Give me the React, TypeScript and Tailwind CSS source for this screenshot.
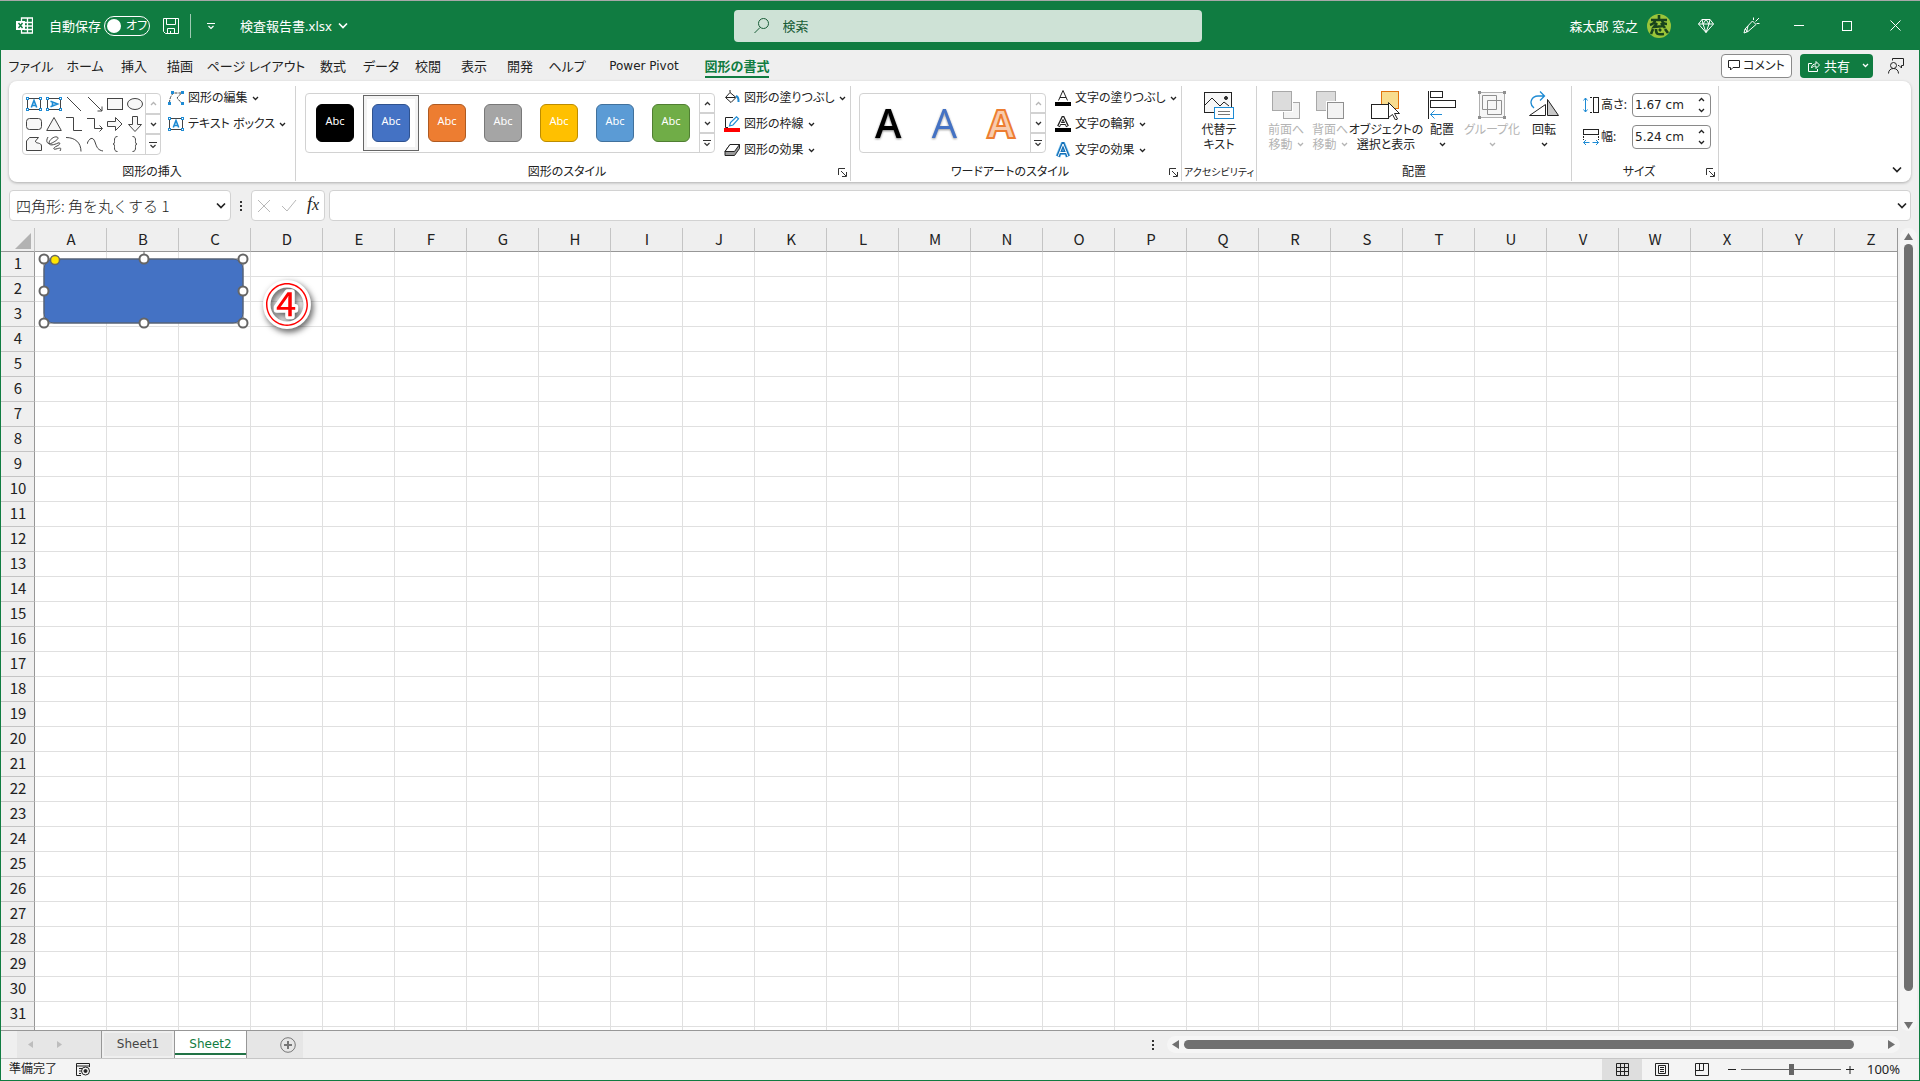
import React from "react";
import clsx from "clsx";

const menuTabs = [
  { label: "ファイル", width: "w-[56px]" },
  { label: "ホーム", width: "w-[52px]" },
  { label: "挿入", width: "w-[46px]" },
  { label: "描画", width: "w-[46px]" },
  { label: "ページ レイアウト", width: "w-[106px]" },
  { label: "数式", width: "w-[48px]" },
  { label: "データ", width: "w-[48px]" },
  { label: "校閲", width: "w-[46px]" },
  { label: "表示", width: "w-[46px]" },
  { label: "開発", width: "w-[46px]" },
  { label: "ヘルプ", width: "w-[48px]" },
  { label: "Power Pivot", width: "w-[106px]" },
  { label: "図形の書式", width: "w-[80px]", active: true },
];

const shapeStyles = [
  "bg-black border-black",
  "bg-[#4472c4] border-[#2f528f]",
  "bg-[#ed7d31] border-[#ae5a21]",
  "bg-[#a5a5a5] border-[#787878]",
  "bg-[#ffc000] border-[#bc8c00]",
  "bg-[#5b9bd5] border-[#41719c]",
  "bg-[#70ad47] border-[#507e32]",
];

const columns = "ABCDEFGHIJKLMNOPQRSTUVWXYZ".split("");
const rows = Array.from({ length: 31 }, (_, i) => i + 1);

type IconProps = {
  w?: number;
  h?: number;
  className?: string;
  children: React.ReactNode;
};

const Icon = ({ w = 16, h = 16, className, children }: IconProps) => (
  <svg
    width={w}
    height={h}
    viewBox={`0 0 ${w} ${h}`}
    fill="none"
    stroke="currentColor"
    className={clsx("shrink-0", className)}
    aria-hidden="true"
  >
    {children}
  </svg>
);

const Chevron = ({ up, className }: { up?: boolean; className?: string }) => (
  <Icon w={7} h={5} className={className}>
    <path d={up ? "M1 4l2.5-2.5L6 4" : "M1 1l2.5 2.5L6 1"} strokeWidth="1.3" />
  </Icon>
);

const BigChevron = () => (
  <Icon w={10} h={7}>
    <path d="M1 1.5l4 4 4-4" strokeWidth="1.7" />
  </Icon>
);

const MoreChevron = () => (
  <Icon w={8} h={8}>
    <path d="M0 1.5h8M1.5 4l2.5 2.5L6.500 4" strokeWidth="1.2" />
  </Icon>
);

const Launcher = () => (
  <button aria-label="詳細設定" className="flex text-[#333]">
    <Icon w={9} h={9}>
      <path d="M.5 7V.5H7M3 3l5 5M8.500 4v4.500H4" />
    </Icon>
  </button>
);

const TextBoxIcon = ({ vertical }: { vertical?: boolean }) => (
  <Icon w={16} h={14}>
    <rect x="1.5" y="1.500" width="13" height="11" stroke="#444" />
    <g fill="#fff" stroke="#1e8bd4">
      <rect x=".5" y=".5" width="2" height="2" />
      <rect x="13.5" y=".5" width="2" height="2" />
      <rect x=".5" y="11.5" width="2" height="2" />
      <rect x="13.5" y="11.5" width="2" height="2" />
    </g>
    <path
      d="M5.300 10.500L8 3.500l2.700 7M6.300 8.500h3.400"
      stroke="#1e8bd4"
      strokeWidth="1.6"
      transform={vertical ? "rotate(90 8 7)" : undefined}
    />
  </Icon>
);

const shapeIcons = [
  <TextBoxIcon />,
  <TextBoxIcon vertical />,
  <Icon><path d="M1 1l14 14" /></Icon>,
  <Icon><path d="M1 1l14 14M15 10.500V15h-4.500" /></Icon>,
  <Icon><rect x=".5" y="2.500" width="15" height="11" fill="#f7f7f7" /></Icon>,
  <Icon><ellipse cx="8" cy="8" rx="7.500" ry="5.500" fill="#f7f7f7" /></Icon>,
  <Icon><rect x=".5" y="2.500" width="15" height="11" rx="3" fill="#f7f7f7" /></Icon>,
  <Icon><path d="M8 1.500L15.300 14.500H.7z" fill="#f7f7f7" /></Icon>,
  <Icon><path d="M0 1.500h7.500v13H16" /></Icon>,
  <Icon><path d="M0 2.500h7.500v10H15M12.500 9.500l3 3-3 3" /></Icon>,
  <Icon><path d="M.5 5.500h8v-4l6.500 6.500-6.500 6.500v-4h-8z" fill="#f7f7f7" /></Icon>,
  <Icon><path d="M5.500.5h5v8h4L8 15.500 1.500 8.500h4z" fill="#f7f7f7" /></Icon>,
  <Icon><path d="M.5 14.500V5l3-3.500h9L9.500 5c-.5 3 6 1 6 5v4.500z" fill="#f7f7f7" /></Icon>,
  <Icon><path d="M2 1c-3 5 0 8 4 6s8-5 5-6-8 3-8 6 5 2 9 0c3-1 2 2-1 3s-5 4-1 3 6-2 4 2" /></Icon>,
  <Icon><path d="M0 1.500c9 0 15 5 15 14" /></Icon>,
  <Icon><path d="M0 8c2-6 6-8 8-2s3 8 8 9" /></Icon>,
  <Icon><path d="M10.500.5C5 .5 9.500 8 6 8c3.500 0-1 7.500 4.500 7.500" /></Icon>,
  <Icon><path d="M5.500.5C11 .5 6.500 8 10 8c-3.500 0 1 7.500-4.500 7.500" /></Icon>,
];

const GalleryScroll = ({ upOff }: { upOff?: boolean }) => (
  <div className="flex w-[15px] flex-col divide-y-2 divide-[#d2d2d2] border-l border-[#d2d2d2] text-[#333]">
    <button
      aria-label="上へ"
      className={clsx("flex flex-1 items-center justify-center", upOff && "text-[#b5b5b5]")}
    >
      <Chevron up />
    </button>
    <button aria-label="下へ" className="flex flex-1 items-center justify-center">
      <Chevron />
    </button>
    <button aria-label="その他" className="flex flex-1 items-center justify-center">
      <MoreChevron />
    </button>
  </div>
);

const Group = ({
  label,
  width,
  launcher,
  narrow,
  children,
}: {
  label: string;
  width: string;
  launcher?: boolean;
  narrow?: boolean;
  children: React.ReactNode;
}) => (
  <section
    aria-label={label}
    className={clsx("flex shrink-0 flex-col border-r border-[#d2d2d2]", width)}
  >
    <div className="flex h-[77px]">{children}</div>
    <div className="flex h-[18px] items-center">
      <span
        className={clsx("flex flex-1 justify-center whitespace-nowrap", narrow && "text-[10px]")}
      >
        {label}
      </span>
      {launcher && (
        <span className="w-3">
          <Launcher />
        </span>
      )}
    </div>
  </section>
);

const SmallButton = ({ icon, children }: { icon: React.ReactNode; children: React.ReactNode }) => (
  <button className="flex h-[26px] items-center gap-1 whitespace-nowrap pb-[2px]">
    <span className="flex w-4 justify-center">{icon}</span>
    <span>{children}</span>
    <Chevron />
  </button>
);

const LargeButton = ({
  icon,
  lines,
  width,
  disabled,
  menu,
}: {
  icon: React.ReactNode;
  lines: string[];
  width: string;
  disabled?: boolean;
  menu?: boolean;
}) => (
  <button
    disabled={disabled}
    className={clsx(
      "flex flex-col items-center whitespace-nowrap pt-[2px]",
      width,
      disabled && "text-[#b4b4b4]"
    )}
  >
    <span className="flex h-[34px] items-center">{icon}</span>
    <span className="h-[15px]">{lines[0]}</span>
    <span className="flex h-[15px] items-center gap-1">
      {lines[1]}
      {menu && <Chevron />}
    </span>
  </button>
);

const TitleBar = () => (
  <header className="flex h-[49px] shrink-0 items-center bg-[#107c41] text-white">
    <div className="flex flex-1 items-center pl-4">
      <Icon w={17} h={17}>
        <path d="M5.500 4V1h11v15h-11v-3M8 5.500h8M8 9h8M8 12.500h8M11.500 1v15" strokeWidth="1.3" />
        <rect x="0" y="4" width="9" height="9" fill="#fff" stroke="none" />
        <path d="M2.500 6l4 5M6.500 6l-4 5" stroke="#107c41" strokeWidth="1.4" />
      </Icon>
      <label className="ml-4 flex items-center gap-[3px]">
        自動保存
        <input type="checkbox" className="peer sr-only" />
        <span className="flex h-5 w-[46px] items-center gap-[5px] rounded-full border border-white pl-[2px]">
          <span className="size-[14px] rounded-full bg-white" />
          <span className="text-[12px]">オフ</span>
        </span>
      </label>
      <button aria-label="保存" className="ml-[13px]">
        <Icon>
          <path d="M.5.5h15v15h-13l-2-2zM3.500.5v6h9v-6M4.500 15.500v-5h7v5M7.500 13v2" />
        </Icon>
      </button>
      <span className="ml-[11px] h-6 w-px bg-white/60" />
      <button aria-label="クイック アクセス ツール バーのカスタマイズ" className="ml-4">
        <MoreChevron />
      </button>
      <button className="ml-[25px] flex items-center gap-[6px]">
        <span>検査報告書.xlsx</span>
        <BigChevron />
      </button>
    </div>
    <label className="flex h-8 w-[468px] items-center gap-[13px] rounded bg-[#cee2d6] pl-5 text-[#185c37]">
      <Icon>
        <circle cx="9.500" cy="5.500" r="5" />
        <path d="M6 9.500L.5 15" />
      </Icon>
      <input
        type="text"
        aria-label="検索"
        placeholder="検索"
        className="flex-1 bg-transparent outline-none placeholder:text-[#185c37] placeholder:opacity-100"
      />
    </label>
    <div className="flex flex-1 items-center justify-end pr-px">
      <span>森太郎 窓之</span>
      <svg width="24" height="24" viewBox="0 0 24 24" className="ml-[9px]" aria-hidden="true">
        <circle cx="12" cy="12" r="12" fill="#9bc53a" />
        <path
          d="M12 1v4M4 6h16M8 6c0 3-2 4-5 5M15 6c0 3 3 4 5 4M10 9l-3 4 10-1M14 9l4 5M6 15l-2 5M9 15c0 5 1 6 8 5M12 15l2 2M18 15l3 4"
          stroke="#17431c"
          strokeWidth="2.600"
          fill="none"
        />
      </svg>
      <button aria-label="Premium" className="ml-[27px]">
        <Icon className="block">
          <path d="M4 1.500h8l3.500 4.500L8 14.500.5 6zM.5 6h15M5 6l3 8.500L11 6M4 1.500L5 6l3-4.500L11 6l1-4.500" />
        </Icon>
      </button>
      <button aria-label="新機能" className="ml-[29px]">
        <Icon w={17} h={17} className="block">
          <path d="M9.500 4l3.500 3.500L5 14.500l-4 1.500 1-4zM2 12l3 2.500M5 9l-1.500 6M10.500 3V.5M12.500 4.500L16 1M13.500 6.500h3" />
        </Icon>
      </button>
      <div className="ml-[15px] flex">
        <button aria-label="最小化" className="flex h-8 w-12 items-center justify-center">
          <Icon w={10} h={10}><path d="M0 4.500h10" /></Icon>
        </button>
        <button aria-label="最大化" className="flex h-8 w-12 items-center justify-center">
          <Icon w={10} h={10}><rect x=".5" y=".5" width="9" height="9" /></Icon>
        </button>
        <button aria-label="閉じる" className="flex h-8 w-12 items-center justify-center">
          <Icon w={11} h={11}><path d="M.5.5l10 10M10.500.5l-10 10" /></Icon>
        </button>
      </div>
    </div>
  </header>
);

const MenuTabs = () => (
  <nav className="flex h-[31px] shrink-0 items-center pr-[15px] pl-[2px]">
    {menuTabs.map((tab) => (
      <button
        key={tab.label}
        className={clsx("flex h-full justify-center whitespace-nowrap pt-[6px]", tab.width)}
      >
        <span
          className={clsx(
            "h-[22px] border-b-2 leading-5",
            tab.active ? "border-[#107c41] font-bold text-[#107c41]" : "border-transparent",
            tab.label === "Power Pivot" && "font-['DejaVu_Sans',sans-serif] text-[12px]"
          )}
        >
          {tab.label}
        </span>
      </button>
    ))}
    <button className="ml-auto flex h-6 w-[71px] items-center justify-center gap-[3px] rounded border border-[#8a8a8a] bg-white text-[12px]">
      <Icon w={12} h={11}><path d="M.5.5h11v7H5l-2.500 2.500V7.500h-2z" /></Icon>
      コメント
    </button>
    <button className="ml-2 flex h-6 w-[73px] items-center rounded bg-[#107c41] pl-2 text-white">
      <Icon w={12} h={12}>
        <path d="M4 3.500H.5v8h9V9M3.500 8c0-3 2-4 4.500-4V1.500L11.500 5 8 8.500V6C6 6 4.500 6.500 3.500 8z" />
      </Icon>
      <span className="mr-3 ml-1">共有</span>
      <Chevron />
    </button>
    <button aria-label="アカウント" className="ml-[15px]">
      <Icon w={16} h={16}>
        <circle cx="5.500" cy="7.500" r="3" />
        <path d="M.5 15.500c0-3 2-5 5-5s5 2 5 5M4.500 2.500v-2h11v7h-2V10L11 7.500H10" />
      </Icon>
    </button>
  </nav>
);

const Ribbon = () => (
  <div className="mx-2 flex h-[101px] shrink-0 rounded-lg bg-white pt-[5px] pb-px text-[12px] shadow-[0_1px_3px_rgba(0,0,0,0.28)]">
    <Group label="図形の挿入" width="w-[287px]">
      <div className="mt-[7px] ml-[13px] flex h-[62px] rounded border border-[#d2d2d2]">
        <div className="grid w-[122px] grid-cols-6 place-items-center pl-px text-[#444]">
          {shapeIcons.map((icon, i) => (
            <button key={i} aria-label={`図形 ${i + 1}`}>
              {icon}
            </button>
          ))}
        </div>
        <GalleryScroll upOff />
      </div>
      <div className="ml-[7px] flex-col">
        <SmallButton
          icon={
            <Icon w={16} h={14}>
              <path d="M1.500 12c0-6 3-9 4-10h5l3 0M13 2.500L9 7l4.500 5" stroke="#444" strokeDasharray="3 1" />
              <path d="M3 0h3v3H3zM13 0h3v3h-3zM0 11h3v3H0zM13 11h3v3h-3z" fill="#1e8bd4" stroke="none" />
            </Icon>
          }
        >
          図形の編集
        </SmallButton>
        <SmallButton icon={<TextBoxIcon />}>テキスト ボックス</SmallButton>
      </div>
    </Group>

    <Group label="図形のスタイル" width="w-[555px]" launcher>
      <div className="mt-[7px] ml-[9px] flex h-[60px] rounded border border-[#d2d2d2]">
        <div className="flex w-[393px] items-center pl-px">
          {shapeStyles.map((color, i) => (
            <button
              key={color}
              aria-label={`スタイル ${i + 1}`}
              className={clsx(
                "flex size-14 items-center justify-center border",
                i === 1 ? "border-[#666] shadow-[inset_0_0_0_3px_#f3f3f3]" : "border-transparent"
              )}
            >
              <span
                className={clsx(
                  "flex size-[38px] items-center justify-center rounded-md border pb-1 text-[11px] text-white",
                  color
                )}
              >
                Abc
              </span>
            </button>
          ))}
        </div>
        <GalleryScroll />
      </div>
      <div className="ml-[9px] flex-col">
        <SmallButton
          icon={
            <Icon>
              <path d="M6 2.500l6 5-5 5-5.500-5zM6 2.500V0M2 7.500h9" />
              <path d="M12 6c3 1 2.500 4 2.500 6" stroke="#1e8bd4" strokeWidth="2" />
            </Icon>
          }
        >
          図形の塗りつぶし
        </SmallButton>
        <SmallButton
          icon={
            <Icon>
              <path d="M9 1.500H1.500v10H4" />
              <path d="M5.500 10l1-3.500L12.500.8l2 2L9 9z" stroke="#1e8bd4" strokeWidth="1.200" />
              <path d="M0 12h16v4H0z" fill="#f00" stroke="none" />
            </Icon>
          }
        >
          図形の枠線
        </SmallButton>
        <SmallButton
          icon={
            <Icon>
              <path d="M1 9.500L6 2.500h9.500v4L10.500 13.500H1z" fill="#999" />
              <path d="M1 9.500L6 2.500h9.500L10.500 9.500z" fill="#fff" />
            </Icon>
          }
        >
          図形の効果
        </SmallButton>
      </div>
    </Group>

    <Group label="ワードアートのスタイル" width="w-[331px]" launcher>
      <div className="mt-[7px] ml-2 flex h-[60px] rounded border border-[#d2d2d2]">
        <div className="flex w-[170px] items-center justify-around font-['Open_Sans',sans-serif] text-[40px] leading-none font-semibold">
          <button className="pb-px text-black drop-shadow-[0_1px_1px_rgba(0,0,0,0.5)]">A</button>
          <button className="pb-px font-medium text-[#4472c4] drop-shadow-[0_1px_1px_rgba(0,0,0,0.4)]">A</button>
          <button className="pb-px font-bold text-[#f8cbad] [-webkit-text-stroke:2px_#ed7d31]">A</button>
        </div>
        <GalleryScroll upOff />
      </div>
      <div className="ml-[9px] flex-col">
        <SmallButton
          icon={
            <Icon>
              <path d="M3.500 10.500L8 .5l4.500 10M5 7.500h6" />
              <path d="M0 12h16v4H0z" fill="#000" stroke="none" />
            </Icon>
          }
        >
          文字の塗りつぶし
        </SmallButton>
        <SmallButton
          icon={
            <Icon>
              <path d="M3.500 10.500L8 1l4.500 9.500M5 7.500h6" strokeWidth="3" />
              <path d="M4 10L8 1.500l4 8.500M5 7.500h6" stroke="#fff" />
              <path d="M0 12h16v4H0z" fill="#000" stroke="none" />
            </Icon>
          }
        >
          文字の輪郭
        </SmallButton>
        <SmallButton
          icon={
            <Icon>
              <path d="M3 14.500L8 2l5 12.500M5 10.500h6" stroke="#7fc4f0" strokeWidth="5" />
              <path d="M3 14.500L8 2l5 12.500M5 10.500h6" stroke="#1470b8" strokeWidth="3.500" />
              <path d="M3 14.500L8 2l5 12.500M5 10.500h6" stroke="#fff" />
            </Icon>
          }
        >
          文字の効果
        </SmallButton>
      </div>
    </Group>

    <Group label="アクセシビリティ" width="w-[75px]" narrow>
      <LargeButton
        width="w-full"
        lines={["代替テ", "キスト"]}
        icon={
          <Icon w={30} h={27}>
            <rect x=".5" y=".5" width="27" height="20" fill="#f7f7f7" />
            <path d="M1 13l7-7 8 8 4-4 5 4" />
            <circle cx="22" cy="6" r="1.500" fill="#333" />
            <rect x="10.500" y="15.500" width="19" height="11" fill="#fff" stroke="#1e8bd4" />
            <path d="M14 19.500h12M14 22.500h12" stroke="#777" />
          </Icon>
        }
      />
    </Group>

    <Group label="配置" width="w-[315px]">
      <div className="flex pl-[7px]">
        <LargeButton
          disabled
          menu
          width="w-[44px]"
          lines={["前面へ", "移動"]}
          icon={
            <Icon w={28} h={28}>
              <rect x="11.500" y="11.500" width="16" height="16" fill="#f3f3f3" stroke="#a8a8a8" />
              <path d="M0 0h21v21H0z" fill="#fff" stroke="none" />
              <rect x=".5" y=".5" width="19" height="19" fill="#dcdcdc" stroke="#a8a8a8" />
            </Icon>
          }
        />
        <LargeButton
          disabled
          menu
          width="w-[44px]"
          lines={["背面へ", "移動"]}
          icon={
            <Icon w={28} h={28}>
              <rect x=".5" y=".5" width="19" height="19" fill="#dcdcdc" stroke="#a8a8a8" />
              <path d="M10 10h18v18H10z" fill="#fff" stroke="none" />
              <rect x="11.500" y="11.500" width="16" height="16" fill="#f3f3f3" stroke="#8f8f8f" />
            </Icon>
          }
        />
        <LargeButton
          width="w-[68px]"
          lines={["オブジェクトの", "選択と表示"]}
          icon={
            <Icon w={30} h={30}>
              <rect x="10.500" y="1.500" width="17" height="17" fill="#f8dc8f" stroke="#e0730e" />
              <rect x=".5" y="14.500" width="17" height="14" fill="#fff" />
              <path d="M17.500 12.500l11 11h-5l3 5.500-2 1-3-5.500-4 3z" fill="#fff" />
            </Icon>
          }
        />
        <LargeButton
          menu
          width="w-[44px]"
          lines={["配置"]}
          icon={
            <Icon w={28} h={28}>
              <path d="M.5 0v28" />
              <rect x="2.500" y=".5" width="12" height="6" />
              <rect x="2.500" y="9.500" width="25" height="7" />
              <path d="M14 23.500H2.500M6.500 19.500l-4 4 4 4" stroke="#1e8bd4" />
            </Icon>
          }
        />
        <LargeButton
          disabled
          menu
          width="w-[56px]"
          lines={["グループ化"]}
          icon={
            <Icon w={28} h={28}>
              <rect x="1.500" y="1.500" width="25" height="25" fill="#f7f7f7" stroke="#b0b0b0" />
              <path d="M4.500 4.500h14v14h-14zM9.500 9.500h14v14h-14z" stroke="#8f8f8f" />
              <path d="M0 0h3v3H0zM25 0h3v3h-3zM0 25h3v3H0zM25 25h3v3h-3z" fill="#8f8f8f" stroke="none" />
            </Icon>
          }
        />
        <LargeButton
          menu
          width="w-[48px]"
          lines={["回転"]}
          icon={
            <Icon w={30} h={28}>
              <path d="M.5 24.500l16-11v11z" fill="#fff" />
              <path d="M18.500 8.500v16h11z" fill="#c8c8c8" />
              <path d="M5 17C-1 12 3 5 9 5h6M11 .5L15.500 5 11 9.500" stroke="#1e8bd4" strokeWidth="1.300" />
            </Icon>
          }
        />
      </div>
    </Group>

    <Group label="サイズ" width="w-[147px]" launcher>
      <div className="mt-[7px] ml-[11px] flex flex-col gap-2">
        <SizeField
          id="shape-height"
          label="高さ:"
          value="1.67 cm"
          icon={
            <Icon>
              <path d="M2.500 1v14M.5 3.500L2.500 1l2 2.500M.5 12.500l2 2.500 2-2.500" stroke="#1e8bd4" />
              <path d="M7 .5h3M7 15.500h3" strokeDasharray="2 1" />
              <rect x="10.500" y=".5" width="5" height="15" />
            </Icon>
          }
        />
        <SizeField
          id="shape-width"
          label="幅:"
          value="5.24 cm"
          icon={
            <Icon>
              <rect x=".5" y=".5" width="15" height="5" />
              <path d="M.5 7v4M15.500 7v4" strokeDasharray="2 1" />
              <path d="M.5 13.500h6M9.500 13.500h6M3 11l-2.500 2.500L3 16M13 11l2.500 2.500L13 16" stroke="#1e8bd4" />
            </Icon>
          }
        />
      </div>
    </Group>

    <button aria-label="リボンを折りたたむ" className="mr-[9px] mb-2 ml-auto self-end">
      <BigChevron />
    </button>
  </div>
);

const SizeField = ({
  id,
  label,
  value,
  icon,
}: {
  id: string;
  label: string;
  value: string;
  icon: React.ReactNode;
}) => (
  <div className="flex h-6 items-center gap-[2px]">
    {icon}
    <label htmlFor={id} className="w-[29px] whitespace-nowrap">
      {label}
    </label>
    <div className="flex h-6 w-[79px] items-center rounded border border-[#8a8a8a] bg-white pr-[5px] pl-[2px]">
      <input
        id={id}
        type="text"
        defaultValue={value}
        className="w-0 flex-1 font-['DejaVu_Sans',sans-serif] text-[12px] outline-none"
      />
      <div className="flex flex-col gap-[6px]">
        <button aria-label="増やす"><Chevron up className="block" /></button>
        <button aria-label="減らす"><Chevron className="block" /></button>
      </div>
    </div>
  </div>
);

const FormulaBar = () => (
  <div className="mx-2 mt-2 flex h-[31px] shrink-0">
    <div className="flex w-[222px] items-center rounded border border-[#d2d2d2] bg-white pr-1 pl-[6px]">
      <input
        type="text"
        aria-label="名前ボックス"
        defaultValue="四角形: 角を丸くする 1"
        className="w-0 flex-1 font-['Noto_Sans_CJK_JP',sans-serif] text-[15px] font-light outline-none [font-feature-settings:normal]"
      />
      <button aria-label="名前の一覧">
        <BigChevron />
      </button>
    </div>
    <div className="flex w-5 flex-col items-center justify-center gap-[2px]">
      <span className="size-[2px] bg-[#333]" />
      <span className="size-[2px] bg-[#333]" />
      <span className="size-[2px] bg-[#333]" />
    </div>
    <div className="flex w-[74px] items-center justify-between rounded border border-[#d2d2d2] bg-white px-[5px]">
      <button aria-label="キャンセル" className="text-[#b8b8b8]">
        <Icon w={14} h={14}><path d="M1 1l12 12M13 1L1 13" /></Icon>
      </button>
      <button aria-label="入力" className="text-[#b8b8b8]">
        <Icon w={16} h={13}><path d="M1 7l5 5L15 1" /></Icon>
      </button>
      <button
        aria-label="関数の挿入"
        className="pb-1 font-['Liberation_Serif',serif] text-[18px] leading-none italic"
      >
        f<span className="text-[16px]">x</span>
      </button>
    </div>
    <div className="ml-1 flex flex-1 items-center rounded border border-[#d2d2d2] bg-white pr-[3px]">
      <input type="text" aria-label="数式バー" className="h-full flex-1 outline-none" />
      <button aria-label="数式バーの展開">
        <BigChevron />
      </button>
    </div>
  </div>
);

const handles = [
  [0, 0], [100, 0], [199, 0],
  [0, 32], [199, 32],
  [0, 64], [100, 64], [199, 64],
];

// selected rounded rectangle with its resize handles
const SelectedShape = () => (
  <svg
    width="212"
    height="78"
    viewBox="-6 -8 212 78"
    className="absolute top-[23px] left-[37px]"
    aria-label="四角形: 角を丸くする 1"
  >
    <rect x="0" y="0" width="199" height="64" rx="10" fill="#4472c4" stroke="#2f528f" />
    <rect x="0" y="0" width="199" height="64" fill="none" stroke="#6b6b6b" />
    <path d="M100-8v8" stroke="#6b6b6b" />
    {handles.map(([x, y]) => (
      <circle key={`${x}-${y}`} cx={x} cy={y} r="4.500" fill="#fff" stroke="#666" strokeWidth="2" />
    ))}
    <circle cx="11" cy="1" r="4.500" fill="#ffe600" stroke="#666" strokeWidth="1.500" />
  </svg>
);

const StepBadge = () => (
  <svg
    width="60"
    height="80"
    viewBox="0 -10 60 80"
    className="absolute top-[37px] left-[256px] overflow-visible drop-shadow-[2px_3px_3px_rgba(0,0,0,0.65)]"
  >
    <text
      x="30"
      y="47"
      textAnchor="middle"
      fill="#f00"
      stroke="#fff"
      strokeWidth="6"
      strokeLinejoin="round"
      paintOrder="stroke"
      className="font-['Noto_Sans_CJK_JP',sans-serif] text-[45px] font-normal"
    >
      ④
    </text>
  </svg>
);

const Sheet = () => (
  <div className="mt-[7px] flex min-h-0 flex-1">
    <div className="relative min-w-0 flex-1 overflow-hidden border-r border-b border-[#979797]">
      <table className="w-[1906px] table-fixed border-separate border-spacing-0 font-['Noto_Sans_CJK_JP',sans-serif] text-[15px] leading-5">
        <thead>
          <tr className="h-6">
            <th className="w-[34px] border-r border-b border-[#979797] border-r-[#c4c4c4] bg-[#efefef] p-0">
              <svg width="16" height="16" className="mt-[2px] ml-[14px] block" aria-hidden="true">
                <path d="M16 0v16H0z" fill="#b2b2b2" />
              </svg>
            </th>
            {columns.map((col) => (
              <th
                key={col}
                scope="col"
                className="w-[72px] border-r border-b border-[#979797] border-r-[#c4c4c4] bg-[#efefef] p-0 pb-[2px] pl-px font-normal"
              >
                {col}
              </th>
            ))}
          </tr>
        </thead>
        <tbody>
          {rows.map((row) => (
            <tr key={row} className="h-[25px]">
              <th
                scope="row"
                className="border-r border-b border-[#c4c4c4] border-r-[#979797] bg-[#efefef] p-0 pb-[2px] pl-px font-normal"
              >
                {row}
              </th>
              {columns.map((col) => (
                <td key={col} className="border-r border-b border-[#e0e0e0] bg-white p-0" />
              ))}
            </tr>
          ))}
          <tr className="h-[25px]">
            <td className="border-r border-[#979797] bg-[#efefef] p-0" />
            {columns.map((col) => (
              <td key={col} className="border-r border-[#e0e0e0] bg-white p-0" />
            ))}
          </tr>
        </tbody>
      </table>
      <SelectedShape />
      <StepBadge />
    </div>
    <div className="ml-[2px] flex w-[17px] flex-col items-center rounded-full bg-[#f5f5f5] text-[#707070]">
      <Icon w={9} h={7} className="mt-[5px] mb-1">
        <path d="M4.500 0L9 7H0z" fill="currentColor" stroke="none" />
      </Icon>
      <span className="mb-[31px] w-[9px] flex-1 rounded-full bg-[#707070]" />
      <Icon w={9} h={7} className="mb-[2px]">
        <path d="M4.500 7L9 0H0z" fill="currentColor" stroke="none" />
      </Icon>
    </div>
    <span className="w-[2px]" />
  </div>
);

const SheetTabs = () => (
  <div className="flex h-[27px] shrink-0 items-center font-['DejaVu_Sans',sans-serif] text-[12px]">
    <div className="ml-4 flex h-full w-[286px] bg-[#e6e6e6]">
      <div className="flex w-[85px] items-center gap-6 border-r border-[#979797] pl-[11px] text-[#bdbdbd]">
        <button aria-label="前のシート">
          <Icon w={5} h={7}><path d="M5 0v7L0 3.500z" fill="currentColor" stroke="none" /></Icon>
        </button>
        <button aria-label="次のシート">
          <Icon w={5} h={7}><path d="M0 0v7l5-3.500z" fill="currentColor" stroke="none" /></Icon>
        </button>
      </div>
      <button className="w-[72px] border-2 border-[#efefef] pb-px text-[#444]">Sheet1</button>
      <button className="w-[73px] border-x border-[#979797] bg-white pb-[3px] text-[#107c41]">
        <span className="flex h-[24px] items-center justify-center border-b-2 border-[#217346] pt-[3px]">
          Sheet2
        </span>
      </button>
      <button aria-label="新しいシート" className="ml-[33px] text-[#777]">
        <Icon w={16} h={16}>
          <circle cx="8" cy="8" r="7.300" />
          <path d="M8 4v8M4 8h8" strokeWidth="2" />
        </Icon>
      </button>
    </div>
    <div className="ml-auto flex flex-col gap-[2px]">
      <span className="size-[2px] bg-[#333]" />
      <span className="size-[2px] bg-[#333]" />
      <span className="size-[2px] bg-[#333]" />
    </div>
    <div className="mr-[19px] mb-px ml-[13px] flex h-[17px] w-[38.2%] items-center rounded-full bg-[#f5f5f5] px-[5px] text-[#707070]">
      <Icon w={7} h={9}><path d="M7 0v9L0 4.500z" fill="currentColor" stroke="none" /></Icon>
      <span className="mr-[34px] ml-[5px] h-[9px] flex-1 rounded-full bg-[#707070]" />
      <Icon w={7} h={9}><path d="M0 0v9l7-4.500z" fill="currentColor" stroke="none" /></Icon>
    </div>
  </div>
);

const StatusBar = () => (
  <footer className="flex h-[22px] shrink-0 items-center border-t border-[#c6c6c6] bg-[#f4f4f4] pl-2 text-[12px]">
    <span className="pb-px">準備完了</span>
    <button aria-label="マクロの記録" className="ml-[19px]">
      <Icon w={15} h={13}>
        <path d="M5 12.500H.5V.5h13V4M.5 3h13M3 5.500h3M3 8h2M3 10.500h2" />
        <circle cx="9.500" cy="8" r="4" />
        <circle cx="9.500" cy="8" r="1.500" fill="currentColor" />
      </Icon>
    </button>
    <div className="ml-auto flex h-full">
      <button aria-label="標準" className="flex w-10 items-center justify-center bg-[#dedede] pb-px">
        <Icon w={13} h={13}><path d="M.5.5h12v12H.5zM4.500.5v12M8.500.5v12M.5 4.500h12M.5 8.500h12" /></Icon>
      </button>
      <button aria-label="ページ レイアウト" className="flex w-10 items-center justify-center pb-px">
        <Icon w={14} h={13}><path d="M.5.5h13v12H.5zM3.500 2.500h7v8h-7zM5 4.500h4M5 6.500h4M5 8.500h4" /></Icon>
      </button>
      <button aria-label="改ページ プレビュー" className="flex w-10 items-center justify-center pb-px">
        <Icon w={14} h={13}><path d="M.5.5h13v12H.5zM4.500.5v7M.5 7.500h8v-7" /></Icon>
      </button>
    </div>
    <button aria-label="縮小" className="ml-[6px]">
      <Icon w={8} h={8}><path d="M0 3.500h8" /></Icon>
    </button>
    <input
      type="range"
      aria-label="ズーム"
      min="0"
      max="100"
      defaultValue="50"
      className="mx-[5px] h-3 w-[100px] appearance-none bg-transparent [&::-webkit-slider-runnable-track]:h-px [&::-webkit-slider-runnable-track]:bg-[#666] [&::-webkit-slider-thumb]:-mt-[5px] [&::-webkit-slider-thumb]:h-[11px] [&::-webkit-slider-thumb]:w-[5px] [&::-webkit-slider-thumb]:appearance-none [&::-webkit-slider-thumb]:bg-[#666]"
    />
    <button aria-label="拡大">
      <Icon w={8} h={8}><path d="M0 3.500h8M4 0v8" /></Icon>
    </button>
    <span className="mr-[18px] ml-[13px] w-[34px] pb-px text-[13px]">100%</span>
  </footer>
);

const App = () => {
  return (
    <div className="flex h-screen flex-col overflow-hidden border-t border-[#a8a8a8] font-['Noto_Sans','Noto_Sans_CJK_JP',sans-serif] text-[13px] leading-4 text-[#222] [font-feature-settings:'palt']">
      <TitleBar />
      <div className="flex min-h-0 flex-1 flex-col border-x border-b border-[#107c41] bg-[#efefef]">
        <MenuTabs />
        <Ribbon />
        <FormulaBar />
        <Sheet />
        <SheetTabs />
        <StatusBar />
      </div>
    </div>
  );
};

export default App;
